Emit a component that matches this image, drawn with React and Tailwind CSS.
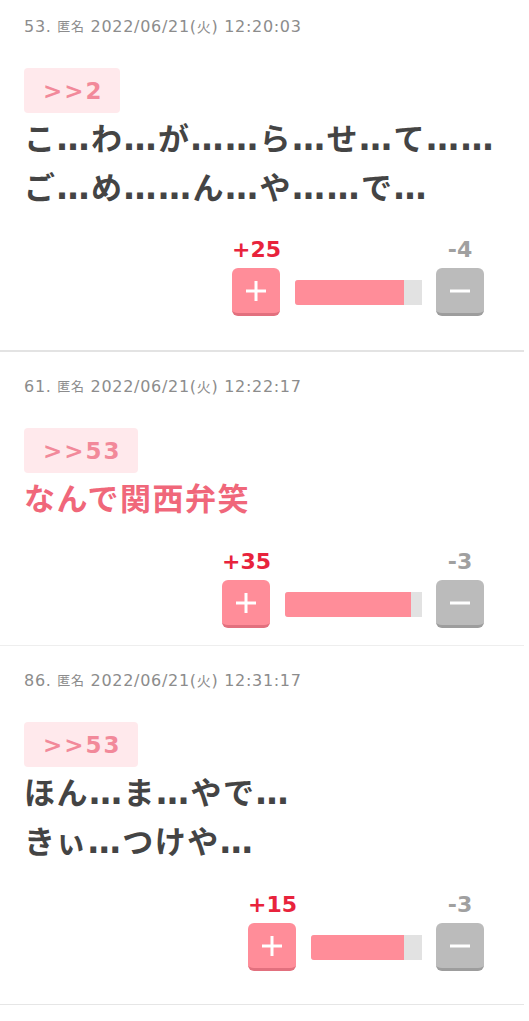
import React from "react";

const LATIN = { fontFamily: '"DejaVu Sans", "Noto Sans CJK JP", sans-serif' };

function Votes({ plus, minus, barW, pt }) {
  const pct = (plus / (plus + minus)) * 100;
  return (
    <div className={`flex justify-end pr-[40px] ${pt}`}>
      <div className="flex items-end">
        <div className="flex flex-col items-center">
          <div className="text-[22px] leading-[24px] font-bold text-[#e8233c] mb-[6px]">+{plus}</div>
          <button className="w-[48px] h-[48px] rounded-[6px] bg-[#ff8d99] border-b-[3px] border-[#e2707e] flex items-center justify-center">
            <svg width="24" height="24" viewBox="0 0 24 24">
              <path d="M12 2v20M2 12h20" stroke="#fff" strokeWidth="3" />
            </svg>
          </button>
        </div>
        <div className="mx-[14px] mb-[11px] h-[25px] flex bg-[#e2e2e2] rounded-l-[3px] overflow-hidden" style={{ width: barW }}>
          <div className="h-full bg-[#ff8d99]" style={{ width: `${pct}%` }} />
        </div>
        <div className="flex flex-col items-center">
          <div className="text-[22px] leading-[24px] font-bold text-[#a0a0a0] mb-[6px]">-{minus}</div>
          <button className="w-[48px] h-[48px] rounded-[6px] bg-[#bbbbbb] border-b-[3px] border-[#9d9d9d] flex items-center justify-center">
            <svg width="24" height="24" viewBox="0 0 24 24">
              <path d="M2 12h20" stroke="#fff" strokeWidth="3" />
            </svg>
          </button>
        </div>
      </div>
    </div>
  );
}

function Header({ no, date, dow, time }) {
  return (
    <div className="h-[20px] flex items-center text-[16px] leading-[20px] tracking-[0.7px] text-[#8c8c8c] whitespace-pre">
      <span>{no}. </span>
      <span className="text-[13px]">匿名</span>
      <span> {date}(</span>
      <span className="text-[14px]">{dow}</span>
      <span>) {time}</span>
    </div>
  );
}

function Line({ text }) {
  const parts = text.split(/(…)/);
  return (
    <div className="h-[49px]">
      {parts.map((p, i) =>
        p === "…" ? (
          <span key={i} className="text-[33px] leading-[0px]">…</span>
        ) : (
          <span key={i}>{p}</span>
        )
      )}
    </div>
  );
}

function Post({ header, anchor, lines, pink, plus, minus, barW, pt, pb, votePt, border }) {
  return (
    <div className={`pl-[24px] mr-[5px] ${pt} ${pb} ${border}`}>
      <Header {...header} />
      <div className="mt-[31px] flex">
        <div className="flex items-center h-[45px] pl-[19px] pr-[16px] bg-[#ffe9ec] rounded-[4px]">
          <span className="text-[23px] leading-[28px] font-bold tracking-[2px] text-[#f2899a]">{anchor}</span>
        </div>
      </div>
      <div className={`mt-[2px] text-[31px] leading-[49px] font-bold tracking-[1.5px] ${pink ? "text-[#f0677a]" : "text-[#444444]"}`}>
        {lines.map((l, i) => (
          <Line key={i} text={l} />
        ))}
      </div>
      <Votes plus={plus} minus={minus} barW={barW} pt={votePt} />
    </div>
  );
}

export default function App() {
  return (
    <div className="w-[529px] bg-white" style={LATIN}>
      <Post
        header={{ no: "53", date: "2022/06/21", dow: "火", time: "12:20:03" }}
        anchor=">>2"
        lines={["こ…わ…が……ら…せ…て……", "ご…め……ん…や……で…"]}
        plus={25}
        minus={4}
        barW={127}
        pt="pt-[17px]"
        pb="pb-[34px]"
        votePt="pt-[25px]"
        border="border-b-2 border-[#e3e3e3]"
      />
      <Post
        header={{ no: "61", date: "2022/06/21", dow: "火", time: "12:22:17" }}
        anchor=">>53"
        lines={["なんで関西弁笑"]}
        pink
        plus={35}
        minus={3}
        barW={137}
        pt="pt-[25px]"
        pb="pb-[17px]"
        votePt="pt-[26px]"
        border="border-b border-[#eeeeee]"
      />
      <Post
        header={{ no: "86", date: "2022/06/21", dow: "火", time: "12:31:17" }}
        anchor=">>53"
        lines={["ほん…ま…やで…", "きぃ…つけや…"]}
        plus={15}
        minus={3}
        barW={111}
        pt="pt-[25px]"
        pb="pb-[33px]"
        votePt="pt-[26px]"
        border="border-b border-[#e6e6e6]"
      />
    </div>
  );
}
